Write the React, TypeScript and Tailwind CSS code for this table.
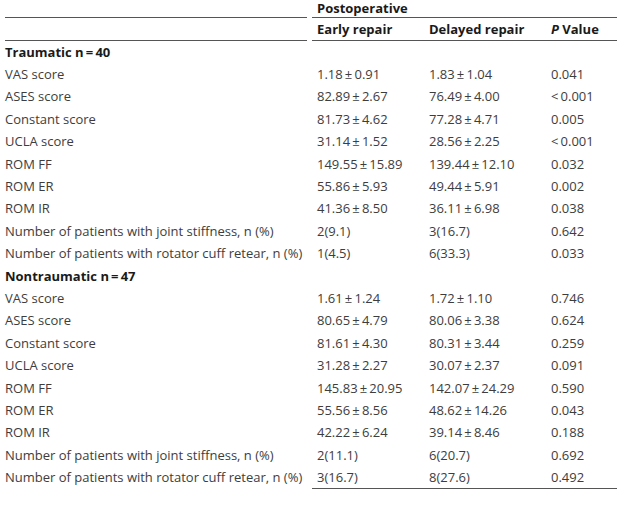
const pm = "\u2009±\u2009";

const traumatic = [
  ["VAS score", `1.18${pm}0.91`, `1.83${pm}1.04`, "0.041"],
  ["ASES score", `82.89${pm}2.67`, `76.49${pm}4.00`, "<\u20090.001"],
  ["Constant score", `81.73${pm}4.62`, `77.28${pm}4.71`, "0.005"],
  ["UCLA score", `31.14${pm}1.52`, `28.56${pm}2.25`, "<\u20090.001"],
  ["ROM FF", `149.55${pm}15.89`, `139.44${pm}12.10`, "0.032"],
  ["ROM ER", `55.86${pm}5.93`, `49.44${pm}5.91`, "0.002"],
  ["ROM IR", `41.36${pm}8.50`, `36.11${pm}6.98`, "0.038"],
  ["Number of patients with joint stiffness, n (%)", "2(9.1)", "3(16.7)", "0.642"],
  ["Number of patients with rotator cuff retear, n (%)", "1(4.5)", "6(33.3)", "0.033"],
];

const nontraumatic = [
  ["VAS score", `1.61${pm}1.24`, `1.72${pm}1.10`, "0.746"],
  ["ASES score", `80.65${pm}4.79`, `80.06${pm}3.38`, "0.624"],
  ["Constant score", `81.61${pm}4.30`, `80.31${pm}3.44`, "0.259"],
  ["UCLA score", `31.28${pm}2.27`, `30.07${pm}2.37`, "0.091"],
  ["ROM FF", `145.83${pm}20.95`, `142.07${pm}24.29`, "0.590"],
  ["ROM ER", `55.56${pm}8.56`, `48.62${pm}14.26`, "0.043"],
  ["ROM IR", `42.22${pm}6.24`, `39.14${pm}8.46`, "0.188"],
  ["Number of patients with joint stiffness, n (%)", "2(11.1)", "6(20.7)", "0.692"],
  ["Number of patients with rotator cuff retear, n (%)", "3(16.7)", "8(27.6)", "0.492"],
];

const cols = "grid grid-cols-[302px_112px_122px_64px] gap-x-[5px]";

function DataRow({ row, last }: { row: string[]; last?: boolean }) {
  return (
    <div className={`${cols} h-[22.4px] items-center`}>
      <div className="whitespace-nowrap">{row[0]}</div>
      <div className={`col-span-3 grid grid-cols-[112px_122px_64px] h-full items-center ${last ? "border-b-[1.5px] border-[#555]" : ""}`}>
        <div className="pl-[5px] whitespace-nowrap">{row[1]}</div>
        <div className="pl-[5px] whitespace-nowrap">{row[2]}</div>
        <div className="pl-[5px] whitespace-nowrap">{row[3]}</div>
      </div>
    </div>
  );
}

function GroupHeader({ title }: { title: string }) {
  return (
    <div className={`${cols} h-[22.4px] items-center`}>
      <div className="font-bold text-[#1a1a1a] whitespace-nowrap">{title}</div>
    </div>
  );
}

export default function App() {
  return (
    <div
      className="w-[617px] h-[506px] bg-white pl-[5px] text-[13px] text-[#3d3d3d] leading-none"
      style={{ fontFamily: '"Open Sans", "Noto Sans", sans-serif' }}
    >
      <div className={`${cols} h-[18px]`}>
        <div className="border-b-[1.5px] border-[#555]" />
        <div className="col-span-3 border-b-[1.5px] border-[#555] pl-[5px] font-bold text-[#1a1a1a] leading-[16px]">
          Postoperative
        </div>
      </div>
      <div className={`${cols} h-[23px]`}>
        <div className="border-b-[1.5px] border-[#555]" />
        <div className="col-span-3 grid grid-cols-[112px_122px_64px] border-b-[1.5px] border-[#555] items-center font-bold text-[#1a1a1a]">
          <div className="pl-[5px]">Early repair</div>
          <div className="pl-[5px]">Delayed repair</div>
          <div className="pl-[5px]">
            <i>P</i> Value
          </div>
        </div>
      </div>
      <GroupHeader title={"Traumatic n\u2009=\u200940"} />
      {traumatic.map((r) => (
        <DataRow key={"t" + r[0]} row={r} />
      ))}
      <GroupHeader title={"Nontraumatic n\u2009=\u200947"} />
      {nontraumatic.map((r, i) => (
        <DataRow key={"n" + r[0]} row={r} last={i === nontraumatic.length - 1} />
      ))}
    </div>
  );
}
